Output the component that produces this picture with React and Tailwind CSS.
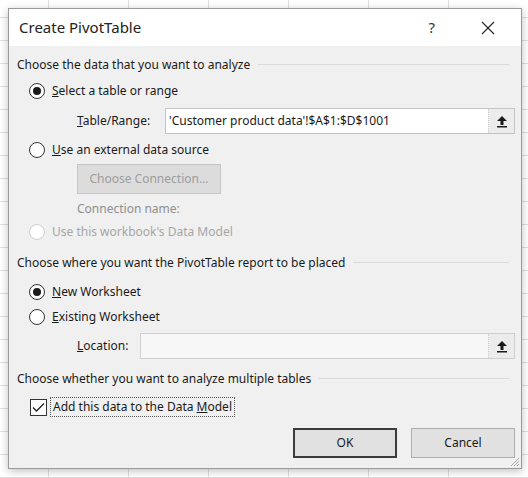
import { useState } from "react";

function UploadIcon() {
  return (
    <svg width="12" height="13" viewBox="0 0 12 13">
      <path d="M6 1 L11 6 L7.5 6 L7.5 10 L4.5 10 L4.5 6 L1 6 Z" fill="#1a1a1a" />
      <rect x="1" y="11" width="10" height="1.5" fill="#1a1a1a" />
    </svg>
  );
}

function Radio({ checked, disabled }) {
  return (
    <span
      className={`w-4 h-4 rounded-full border flex items-center justify-center bg-white ${
        disabled ? "border-[#cfcfcf]" : "border-[#333333]"
      }`}
    >
      {checked && <span className="w-2 h-2 rounded-full bg-[#1a1a1a]" />}
    </span>
  );
}

function Header({ text, top }) {
  return (
    <div className={`flex items-center h-[18px] pl-[8px] pr-[12px] ${top}`}>
      <span>{text}</span>
      <div className="flex-1 h-px bg-[#dadada] ml-2 mt-[-2px]" />
    </div>
  );
}

function RangeInput({ value, filled }) {
  return (
    <div
      className={`flex-1 h-full flex border ${
        filled ? "bg-white border-[#c4c4c4]" : "bg-[#f7f7f7] border-[#cfcfcf]"
      }`}
    >
      <div className="flex-1 flex items-center pl-[3px] whitespace-nowrap">{value}</div>
      <div className="w-[26px] h-full flex items-center justify-center bg-[#ececec] border-l border-[#d0d0d0] border-dotted">
        <UploadIcon />
      </div>
    </div>
  );
}

function App() {
  let [choice, setChoice] = useState("new");

  return (
    <div className="w-[528px] h-[478px] bg-white bg-[linear-gradient(to_right,#dedede_1px,transparent_1px),linear-gradient(to_bottom,#dedede_1px,transparent_1px)] bg-[size:80px_23px] bg-[position:48px_17px] pt-2 pl-2 overflow-hidden font-['Noto_Sans',sans-serif] text-[12px] text-[#1a1a1a]">
      {/* dialog */}
      <div className="w-[514px] h-[461px] border border-[#9a9a9a] bg-[#f0f0f0] shadow-[0_2px_8px_rgba(0,0,0,0.25)] flex flex-col relative">
        {/* title bar */}
        <div className="h-[37px] bg-white flex items-center pl-[10px] pr-[26px]">
          <span className="text-[15px] text-[#222] flex-1">Create PivotTable</span>
          <span className="text-[15px] text-[#333] mr-[46px]">?</span>
          <svg width="14" height="14" viewBox="0 0 14 14">
            <path d="M1 1 L13 13 M13 1 L1 13" stroke="#222" strokeWidth="1.1" />
          </svg>
        </div>

        {/* body */}
        <Header text="Choose the data that you want to analyze" top="mt-[10px]" />

        <div className="flex items-center h-[18px] mt-[8px] pl-[20px] gap-[7px]">
          <Radio checked />
          <span>
            <u>S</u>elect a table or range
          </span>
        </div>

        <div className="flex items-center h-[26px] mt-[8px] pl-[68px] pr-[6px]">
          <span className="w-[88px]">
            <u>T</u>able/Range:
          </span>
          <RangeInput value="'Customer product data'!$A$1:$D$1001" filled />
        </div>

        <div className="flex items-center h-[18px] mt-[7px] pl-[20px] gap-[7px]">
          <Radio />
          <span>
            <u>U</u>se an external data source
          </span>
        </div>

        <div className="flex h-[30px] mt-[5px] pl-[68px]">
          <div className="w-[144px] h-full bg-[#dcdcdc] border border-[#c6c6c6] flex items-center justify-center text-[#9d9d9d]">
            Choose Connection...
          </div>
        </div>

        <div className="flex items-center h-[18px] mt-[6px] pl-[68px] text-[#8f8f8f]">
          Connection name:
        </div>

        <div className="flex items-center h-[18px] mt-[5px] pl-[20px] gap-[7px] text-[#a6a6a6]">
          <Radio disabled />
          <span>Use this workbook's Data Model</span>
        </div>

        <Header text="Choose where you want the PivotTable report to be placed" top="mt-[13px]" />

        <div
          className="flex items-center h-[18px] mt-[11px] pl-[20px] gap-[7px]"
          onClick={() => setChoice("new")}
        >
          <Radio checked={choice === "new"} />
          <span>
            <u>N</u>ew Worksheet
          </span>
        </div>

        <div
          className="flex items-center h-[18px] mt-[7px] pl-[20px] gap-[7px]"
          onClick={() => setChoice("existing")}
        >
          <Radio checked={choice === "existing"} />
          <span>
            <u>E</u>xisting Worksheet
          </span>
        </div>

        <div className="flex items-center h-[26px] mt-[7px] pl-[68px] pr-[6px]">
          <span className="w-[63px]">
            <u>L</u>ocation:
          </span>
          <RangeInput value="" />
        </div>

        <Header text="Choose whether you want to analyze multiple tables" top="mt-[11px]" />

        <div className="flex items-center h-[20px] mt-[9px] pl-[21px] gap-[3px]">
          <span className="w-[17px] h-[17px] border border-[#333] bg-white flex items-center justify-center">
            <svg width="13" height="11" viewBox="0 0 13 11">
              <path d="M1 5.5 L4.5 9 L12 1.5" stroke="#222" strokeWidth="1.3" fill="none" />
            </svg>
          </span>
          <span className="border border-dotted border-[#555] px-[2px] h-[20px] flex items-center">
            <span>
              Add this data to the Data <u>M</u>odel
            </span>
          </span>
        </div>

        <div className="flex justify-end gap-[14px] h-[30px] mt-[11px] pr-[6px]">
          <button className="w-[104px] h-full bg-[#e1e1e1] border-2 border-[#3c3c3c]">OK</button>
          <button className="w-[104px] h-full bg-[#e1e1e1] border border-[#adadad]">Cancel</button>
        </div>

        {/* resize grip */}
        <svg className="absolute right-[1px] bottom-[1px]" width="11" height="11" viewBox="0 0 11 11">
          <path d="M10 2 L2 10 M10 5 L5 10 M10 8 L8 10" stroke="#a8a8a8" strokeWidth="1" />
        </svg>
      </div>
    </div>
  );
}

export default App;
